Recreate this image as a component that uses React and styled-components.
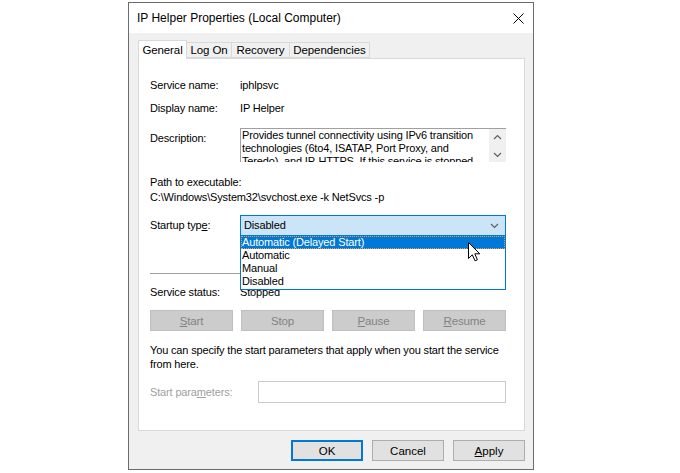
import styled, { createGlobalStyle } from "styled-components";

const GlobalStyle = createGlobalStyle`
  html, body {
    margin: 0;
    background: #ffffff;
  }
  body {
    font-family: "Liberation Sans", Arial, sans-serif;
    font-size: 11px;
    color: #000000;
  }
  * {
    box-sizing: border-box;
  }
`;

const Page = styled.div`
  padding: 2px 0 0 128px;
`;

const Window = styled.div`
  width: 406px;
  height: 468px;
  border: 1px solid #6b6b6b;
  background: #f0f0f0;
  display: flex;
  flex-direction: column;
`;

const TitleBar = styled.div`
  height: 30px;
  flex: none;
  background: #ffffff;
  display: flex;
  align-items: center;
  justify-content: space-between;
  padding: 0 9px 0 8px;
  font-size: 12px;
`;

const Body = styled.div`
  flex: 1;
  display: flex;
  flex-direction: column;
  padding: 7px 8px 8px 9px;
`;

const TabStrip = styled.div`
  height: 18px;
  display: flex;
  align-items: flex-end;
  position: relative;
  z-index: 1;
`;

const Tab = styled.div`
  width: ${(p) => p.$w}px;
  height: ${(p) => (p.$active ? 19 : 16)}px;
  margin-bottom: ${(p) => (p.$active ? -1 : 0)}px;
  margin-left: ${(p) => (p.$first ? 0 : -1)}px;
  border: 1px solid #d9d9d9;
  border-bottom: ${(p) => (p.$active ? "none" : "1px solid #d9d9d9")};
  background: ${(p) => (p.$active ? "#ffffff" : "#f0f0f0")};
  display: flex;
  align-items: center;
  justify-content: center;
  font-size: 11.5px;
  letter-spacing: -0.1px;
  position: relative;
  z-index: ${(p) => (p.$active ? 2 : 1)};
`;

const Panel = styled.div`
  height: 373px;
  background: #ffffff;
  border: 1px solid #d9d9d9;
  padding: 0 18px 0 11px;
  display: flex;
  flex-direction: column;
  letter-spacing: -0.15px;
`;

const Row = styled.div`
  display: flex;
  align-items: ${(p) => (p.$top ? "flex-start" : "center")};
  margin-top: ${(p) => p.$mt}px;
  line-height: 13px;
  min-height: 13px;
  position: relative;
`;

const Label = styled.div`
  width: ${(p) => p.$w || 90}px;
  flex: none;
  padding-top: ${(p) => p.$pt || 0}px;
  color: ${(p) => (p.$dim ? "#a0a0a0" : "#000000")};
`;

const TextBox = styled.div`
  flex: 1;
  height: 34px;
  border-top: 1px solid #a0a0a0;
  border-left: 1px solid #a0a0a0;
  display: flex;
  overflow: hidden;
`;

const TextBody = styled.div`
  flex: 1;
  padding-left: 1px;
  line-height: 13px;
`;

const ScrollBar = styled.div`
  width: 17px;
  flex: none;
  background: #f0f0f0;
  display: flex;
  flex-direction: column;
  align-items: center;
  justify-content: space-between;
  padding: 5px 0 4px;
`;

const Block = styled.div`
  margin-top: ${(p) => p.$mt}px;
  white-space: nowrap;
`;

const Line = styled.div`
  height: ${(p) => p.$h}px;
  line-height: ${(p) => p.$h}px;
`;

const ComboWrap = styled.div`
  flex: 1;
  position: relative;
`;

const Combo = styled.div`
  height: 21px;
  border: 1px solid #0078d7;
  background: #cce4f7;
  display: flex;
  align-items: center;
  justify-content: space-between;
  padding: 0 6px 0 3px;
`;

const DropList = styled.div`
  position: absolute;
  top: 100%;
  left: 0;
  right: 0;
  background: #ffffff;
  border: 1px solid #0078d7;
  border-top: none;
  padding-bottom: 1px;
  z-index: 5;
`;

const Option = styled.div`
  height: 13px;
  line-height: 13px;
  padding-left: 1px;
  background: ${(p) => (p.$sel ? "#0078d7" : "transparent")};
  color: ${(p) => (p.$sel ? "#ffffff" : "#000000")};
  outline: ${(p) => (p.$sel ? "1px dotted #e9a23b" : "none")};
  outline-offset: -1px;
`;

const Cursor = styled.svg`
  position: absolute;
  left: 227px;
  top: 6px;
  z-index: 6;
`;

const Separator = styled.div`
  height: 1px;
  background: #a0a0a0;
  margin-top: ${(p) => p.$mt}px;
`;

const ButtonGrid = styled.div`
  display: grid;
  grid-template-columns: repeat(4, 1fr);
  gap: 8px;
  margin-top: 11px;
`;

const DisabledButton = styled.div`
  height: 21px;
  background: #cccccc;
  border: 1px solid #bfbfbf;
  color: #838383;
  display: flex;
  align-items: center;
  justify-content: center;
  font-size: 11.5px;
`;

const ParamInput = styled.div`
  flex: 1;
  height: 22px;
  border: 1px solid #cccccc;
  background: #ffffff;
`;

const Footer = styled.div`
  display: flex;
  justify-content: flex-end;
  gap: 9px;
  margin-top: 9px;
`;

const DialogButton = styled.div`
  width: 72px;
  height: 21px;
  background: #e1e1e1;
  border: ${(p) => (p.$default ? "2px solid #0078d7" : "1px solid #adadad")};
  display: flex;
  align-items: center;
  justify-content: center;
  font-size: 11.5px;
`;

const Chevron = ({ up, color = "#606060" }) => (
  <svg width={9} height={6} viewBox="0 0 9 6">
    <path
      d={up ? "M1 5 L4.5 1.5 L8 5" : "M1 1 L4.5 4.5 L8 1"}
      fill="none"
      stroke={color}
      strokeWidth="1.2"
    />
  </svg>
);

const tabs = [
  { name: "General", w: 49, active: true },
  { name: "Log On", w: 46 },
  { name: "Recovery", w: 59 },
  { name: "Dependencies", w: 81 },
];

const options = ["Automatic (Delayed Start)", "Automatic", "Manual", "Disabled"];

export default function App() {
  return (
    <>
      <GlobalStyle />
      <Page>
        <Window>
          <TitleBar>
            <span>IP Helper Properties (Local Computer)</span>
            <svg width="11" height="11" viewBox="0 0 11 11">
              <path d="M0.5 0.5 L10.5 10.5 M10.5 0.5 L0.5 10.5" stroke="#000" strokeWidth="1" />
            </svg>
          </TitleBar>
          <Body>
            <TabStrip>
              {tabs.map((t, i) => (
                <Tab key={t.name} $w={t.w} $active={t.active} $first={i === 0}>
                  {t.name}
                </Tab>
              ))}
            </TabStrip>
            <Panel>
              <Row $mt={20}>
                <Label>Service name:</Label>
                <span>iphlpsvc</span>
              </Row>
              <Row $mt={10}>
                <Label>Display name:</Label>
                <span>IP Helper</span>
              </Row>
              <Row $mt={13} $top>
                <Label $pt={4}>Description:</Label>
                <TextBox>
                  <TextBody>
                    Provides tunnel connectivity using IPv6 transition technologies (6to4, ISATAP,
                    Port Proxy, and Teredo), and IP-HTTPS. If this service is stopped, the computer
                    will not have the enhanced connectivity benefits that these technologies offer.
                  </TextBody>
                  <ScrollBar>
                    <Chevron up />
                    <Chevron />
                  </ScrollBar>
                </TextBox>
              </Row>
              <Block $mt={13}>
                <Line $h={15}>Path to executable:</Line>
                <Line $h={15}>C:\Windows\System32\svchost.exe -k NetSvcs -p</Line>
              </Block>
              <Row $mt={10}>
                <Label>
                  Startup typ<u>e</u>:
                </Label>
                <ComboWrap>
                  <Combo>
                    <span>Disabled</span>
                    <Chevron />
                  </Combo>
                  <DropList>
                    {options.map((o, i) => (
                      <Option key={o} $sel={i === 0}>
                        {o}
                      </Option>
                    ))}
                    <Cursor width="13" height="20" viewBox="0 0 13 20">
                      <path
                        d="M0.5 0.5 L0.5 16.5 L4.3 12.8 L7 18.8 L9.4 17.8 L6.8 11.8 L11.8 11.8 Z"
                        fill="#ffffff"
                        stroke="#000000"
                        strokeWidth="1"
                      />
                    </Cursor>
                  </DropList>
                </ComboWrap>
              </Row>
              <Separator $mt={37} />
              <Row $mt={12}>
                <Label>Service status:</Label>
                <span>Stopped</span>
              </Row>
              <ButtonGrid>
                <DisabledButton>
                  <u>S</u>tart
                </DisabledButton>
                <DisabledButton>Stop</DisabledButton>
                <DisabledButton>
                  <u>P</u>ause
                </DisabledButton>
                <DisabledButton>
                  <u>R</u>esume
                </DisabledButton>
              </ButtonGrid>
              <Block $mt={12}>
                <Line $h={14}>
                  You can specify the start parameters that apply when you start the service
                </Line>
                <Line $h={14}>from here.</Line>
              </Block>
              <Row $mt={10}>
                <Label $w={108} $dim>
                  Start para<u>m</u>eters:
                </Label>
                <ParamInput />
              </Row>
            </Panel>
            <Footer>
              <DialogButton $default>OK</DialogButton>
              <DialogButton>Cancel</DialogButton>
              <DialogButton>
                <u>A</u>pply
              </DialogButton>
            </Footer>
          </Body>
        </Window>
      </Page>
    </>
  );
}
